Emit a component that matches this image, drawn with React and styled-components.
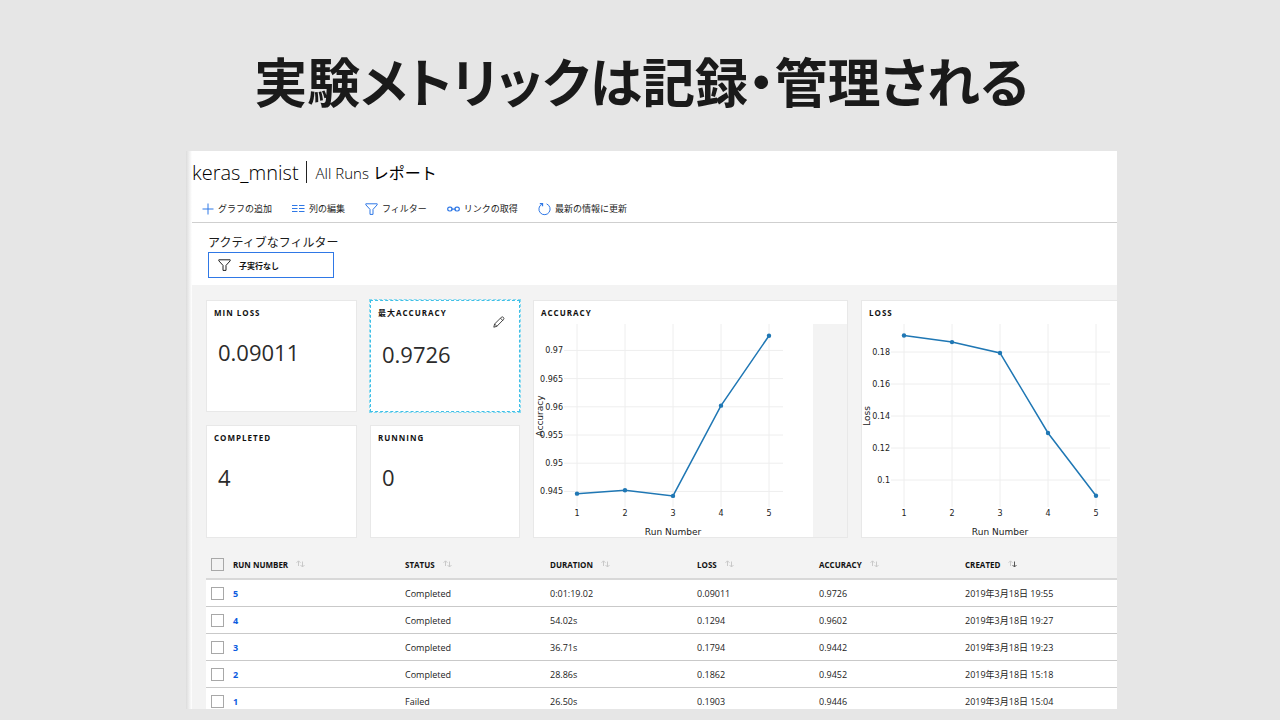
import React from "react";
import styled, { createGlobalStyle } from "styled-components";

const ui = `"Open Sans", "Noto Sans CJK JP", sans-serif`;
const blue = "#2f78e6";

const GlobalStyle = createGlobalStyle`
  * { box-sizing: border-box; }
  body {
    margin: 0;
    background: #e6e6e6;
    color: #1a1a1a;
    font-family: ${ui};
  }
`;

const Slide = styled.main`
  min-height: 100vh;
  padding: 0 163px 11px 186px;
  overflow: hidden;
`;

const SlideTitle = styled.h1`
  margin: 0 -100px 0 -120px;
  padding: 40px 0 31px;
  text-align: center;
  white-space: nowrap;
  font-family: "Noto Sans CJK JP", sans-serif;
  font-size: 53px;
  line-height: 80px;
  font-weight: 700;
  font-feature-settings: "palt";
`;

const Panel = styled.section`
  padding-left: 6px;
  overflow: hidden;
  background: linear-gradient(90deg, #dcdcdc 0, #ffffff 6px);
`;

const Header = styled.header`
  display: flex;
  align-items: center;
  height: 44px;
  padding-bottom: 2px;
  background: #fff;
  white-space: nowrap;
`;

const Name = styled.h2`
  margin: 0;
  font-size: 20px;
  font-weight: 300;
  color: #000;
`;

const Divider = styled.span`
  width: 1px;
  height: 22px;
  margin: 0 9px 0 7px;
  background: #222;
`;

const Report = styled.span`
  font-size: 15px;
  font-weight: 300;
  color: #000;
`;

const ReportKind = styled.span`
  font-size: 16px;
  font-weight: 400;
`;

const Toolbar = styled.nav`
  display: flex;
  align-items: center;
  gap: 20px;
  height: 28px;
  padding-left: 10px;
  background: #fff;
  border-bottom: 1px solid #cfcfcf;
`;

const Tool = styled.button`
  display: flex;
  align-items: center;
  gap: 4px;
  padding: 0;
  border: 0;
  background: none;
  color: #222;
  font-family: ${ui};
  font-size: 9px;
  line-height: 14px;
  white-space: nowrap;

  svg { flex: none; }
`;

const Filters = styled.div`
  height: 62px;
  padding: 11px 16px 0;
  background: #fff;
`;

const FilterLabel = styled.div`
  font-size: 12px;
  line-height: 18px;
`;

const FilterChip = styled.button`
  display: flex;
  align-items: center;
  gap: 8px;
  width: 126px;
  height: 26px;
  padding: 0 9px;
  border: 1px solid ${blue};
  background: #fff;
  color: #111;
  font-family: ${ui};
  font-size: 8px;
  font-weight: 700;
`;

const Dashboard = styled.div`
  padding: 15px 0 0 14px;
  background: #f3f3f3;
`;

const Tiles = styled.div`
  display: grid;
  grid-template-columns: 151px 150px 315px 315px;
  grid-template-rows: 112px 113px;
  gap: 13px;
`;

const Tile = styled.article`
  display: flex;
  flex-direction: column;
  border: 1px ${(p) => (p.$selected ? "dashed #3fbfe6" : "solid #e8e8e8")};
  outline: ${(p) => (p.$selected ? "1px dashed #8adaf0" : "0")};
  background: #fff;
`;

const TallTile = styled(Tile)`
  grid-row: 1 / span 2;
  grid-column: ${(p) => p.$column};
`;

const TileHead = styled.div`
  display: flex;
  justify-content: space-between;
  height: 23px;
  padding: 5px 14px 0 7px;

  svg { margin-top: 10px; }
`;

const TileTitle = styled.h3`
  margin: 0;
  font-size: 8px;
  line-height: 14px;
  font-weight: 700;
  letter-spacing: 1px;
  color: #111;
`;

const Value = styled.div`
  padding: ${(p) => (p.$selected ? 14 : 12)}px 11px 0;
  font-size: 22px;
  line-height: 32px;
  color: #2b2b2b;
`;

const ChartArea = styled.div`
  flex: 1;
  background: #f3f3f3;
  overflow: hidden;

  svg { display: block; background: #fff; }
  text { font-family: "DejaVu Sans", sans-serif; font-size: 8px; fill: #222; }
  .axis { font-size: 9px; }
`;

const Table = styled.table`
  width: 100%;
  margin-top: 12px;
  border-collapse: separate;
  border-spacing: 0;
  table-layout: fixed;
  font-size: 9px;
  white-space: nowrap;

  th, td { padding: 0; text-align: left; }
  th {
    height: 30px;
    border-bottom: 2px solid #d8d8d8;
    color: #111;
    font-size: 8px;
    font-weight: 700;
  }
  td {
    height: 27px;
    padding-top: 7px;
    vertical-align: top;
    line-height: 14px;
    border-bottom: 1px solid #c9c9c9;
    background: #fff;
    color: #222;
  }
  tr:last-child td { height: 21px; border-bottom: 0; }
`;

const Col = styled.col`
  width: ${(p) => (p.$w ? `${p.$w}px` : "auto")};
`;

const HeadCell = styled.div`
  display: flex;
  align-items: center;
  gap: 8px;
`;

const Check = styled.input`
  appearance: none;
  display: block;
  width: 13px;
  height: 13px;
  margin: 0 0 0 5px;
  border: 1px solid #a8a8a8;
`;

const RunLink = styled.a`
  color: #0b5be0;
  font-weight: 700;
  text-decoration: none;
`;

const Plus = () => (
  <svg width="12" height="12" viewBox="0 0 12 12" stroke={blue} fill="none">
    <path d="M6 .5v11M.5 6h11" />
  </svg>
);

const Columns = () => (
  <svg width="13" height="12" viewBox="0 0 13 12" stroke={blue} fill="none">
    <path d="M0 2.5h5.5M7 2.5h5.5M0 5.5h5.5M7 5.5h5.5M0 8.5h5.5M7 8.5h5.5" />
  </svg>
);

const Funnel = ({ color = blue }) => (
  <svg width="13" height="12" viewBox="0 0 13 12" stroke={color} fill="none">
    <path d="M.8.8h11.4v1L8 6.4v5H5v-5L.8 1.8z" />
  </svg>
);

const Link = () => (
  <svg width="13" height="12" viewBox="0 0 13 12" stroke={blue} strokeWidth="1.2" fill="none">
    <rect x=".7" y="4.2" width="4.4" height="3.8" rx="1.9" />
    <rect x="7.9" y="4.2" width="4.4" height="3.8" rx="1.9" />
    <path d="M4 6.1h5" />
  </svg>
);

const Refresh = () => (
  <svg width="13" height="14" viewBox="0 0 13 14" stroke={blue} fill="none">
    <path d="M8.6 1.9A5.6 5.6 0 1 1 3.8 2.2" />
    <path d="M1.8 1.6h2.7v2.7" strokeWidth="1.3" />
  </svg>
);

const Pencil = () => (
  <svg width="12" height="12" viewBox="0 0 12 12" stroke="#333" strokeWidth=".9" fill="none">
    <path d="M.8 11.2l.8-3.2L8.4 1.2q1-.8 2 .2t.2 2L3.9 10.3zM1.6 8l2.3 2.3M7.5 2.2l2.3 2.3" />
  </svg>
);

const Sort = ({ desc }) => (
  <svg width="9" height="8" viewBox="0 0 9 8" fill="none">
    <path stroke="#c9c9c9" d="M2.5 6V1M.5 2.8l2-2 2 2" />
    <path stroke={desc ? "#555" : "#c9c9c9"} d="M6.5 1.5V7M4.5 5l2 2 2-2" />
  </svg>
);

const TOP = 324;

function LineChart({ width, left, label, labelX, ticks, first, step, delta, gridLeft, values }) {
  const x = (i) => left + 48 * i;
  const y = (v) => first - TOP + ((ticks[0] - v) / delta) * step;
  return (
    <svg width={width} height="214" role="img" aria-label={`${label} by run number`}>
      <g stroke="#eeeeee">
        {values.map((_, i) => <line key={i} x1={x(i)} x2={x(i)} y1="0" y2="183" />)}
        {ticks.map((t) => <line key={t} x1={gridLeft} x2={left + 206} y1={y(t)} y2={y(t)} />)}
      </g>
      {ticks.map((t) => (
        <text key={t} x={left - 14} y={y(t) + 3} textAnchor="end">{t}</text>
      ))}
      {values.map((_, i) => (
        <text key={i} x={x(i)} y="192" textAnchor="middle">{i + 1}</text>
      ))}
      <polyline
        points={values.map((v, i) => `${x(i)},${y(v)}`).join(" ")}
        fill="none" stroke="#1f77b4" strokeWidth="1.5"
      />
      {values.map((v, i) => <circle key={i} cx={x(i)} cy={y(v)} r="2.2" fill="#1f77b4" />)}
      <text className="axis" x={x(2)} y="211" textAnchor="middle">Run Number</text>
      <text className="axis" textAnchor="middle" transform={`translate(${labelX} 92) rotate(-90)`}>{label}</text>
    </svg>
  );
}

const tools = [
  [Plus, "グラフの追加"],
  [Columns, "列の編集"],
  [Funnel, "フィルター"],
  [Link, "リンクの取得"],
  [Refresh, "最新の情報に更新"],
];

const columns = [
  ["RUN NUMBER", 172],
  ["STATUS", 145],
  ["DURATION", 147],
  ["LOSS", 122],
  ["ACCURACY", 146],
  ["CREATED", 0],
];

const runs = [
  [5, "Completed", "0:01:19.02", "0.09011", "0.9726", "2019年3月18日 19:55"],
  [4, "Completed", "54.02s", "0.1294", "0.9602", "2019年3月18日 19:27"],
  [3, "Completed", "36.71s", "0.1794", "0.9442", "2019年3月18日 19:23"],
  [2, "Completed", "28.86s", "0.1862", "0.9452", "2019年3月18日 15:18"],
  [1, "Failed", "26.50s", "0.1903", "0.9446", "2019年3月18日 15:04"],
];

function Metric({ title, value, selected }) {
  return (
    <Tile $selected={selected}>
      <TileHead>
        <TileTitle>{title}</TileTitle>
        {selected && <Pencil />}
      </TileHead>
      <Value $selected={selected}>{value}</Value>
    </Tile>
  );
}

function ChartTile({ title, column, children }) {
  return (
    <TallTile $column={column}>
      <TileHead><TileTitle>{title}</TileTitle></TileHead>
      <ChartArea>{children}</ChartArea>
    </TallTile>
  );
}

export default function App() {
  return (
    <Slide lang="ja">
      <GlobalStyle />
      <SlideTitle>実験メトリックは記録・管理される</SlideTitle>
      <Panel>
        <Header>
          <Name>keras_mnist</Name>
          <Divider />
          <Report>All Runs <ReportKind>レポート</ReportKind></Report>
        </Header>
        <Toolbar>
          {tools.map(([Icon, label]) => (
            <Tool key={label} type="button"><Icon />{label}</Tool>
          ))}
        </Toolbar>
        <Filters>
          <FilterLabel>アクティブなフィルター</FilterLabel>
          <FilterChip type="button"><Funnel color="#222" />子実行なし</FilterChip>
        </Filters>
        <Dashboard>
          <Tiles>
            <Metric title="MIN LOSS" value="0.09011" />
            <Metric title="最大ACCURACY" value="0.9726" selected />
            <ChartTile title="ACCURACY" column={3}>
              <LineChart
                width={279} left={43} gridLeft={30} label="Accuracy" labelX={9}
                ticks={[0.97, 0.965, 0.96, 0.955, 0.95, 0.945]} first={350.4} step={28.2} delta={0.005}
                values={[0.9446, 0.9452, 0.9442, 0.9602, 0.9726]}
              />
            </ChartTile>
            <ChartTile title="LOSS" column={4}>
              <LineChart
                width={279} left={42} gridLeft={29} label="Loss" labelX={8}
                ticks={[0.18, 0.16, 0.14, 0.12, 0.1]} first={352} step={32} delta={0.02}
                values={[0.1903, 0.1862, 0.1794, 0.1294, 0.09011]}
              />
            </ChartTile>
            <Metric title="COMPLETED" value="4" />
            <Metric title="RUNNING" value="0" />
          </Tiles>
          <Table>
            <colgroup>
              <Col $w={27} />
              {columns.map(([name, w]) => <Col key={name} $w={w} />)}
            </colgroup>
            <thead>
              <tr>
                <th><Check type="checkbox" aria-label="Select all runs" /></th>
                {columns.map(([name]) => (
                  <th key={name}><HeadCell>{name}<Sort desc={name === "CREATED"} /></HeadCell></th>
                ))}
              </tr>
            </thead>
            <tbody>
              {runs.map(([id, ...cells]) => (
                <tr key={id}>
                  <td><Check type="checkbox" aria-label={`Select run ${id}`} /></td>
                  <td><RunLink href={`#run-${id}`}>{id}</RunLink></td>
                  {cells.map((c, i) => <td key={i}>{c}</td>)}
                </tr>
              ))}
            </tbody>
          </Table>
        </Dashboard>
      </Panel>
    </Slide>
  );
}
